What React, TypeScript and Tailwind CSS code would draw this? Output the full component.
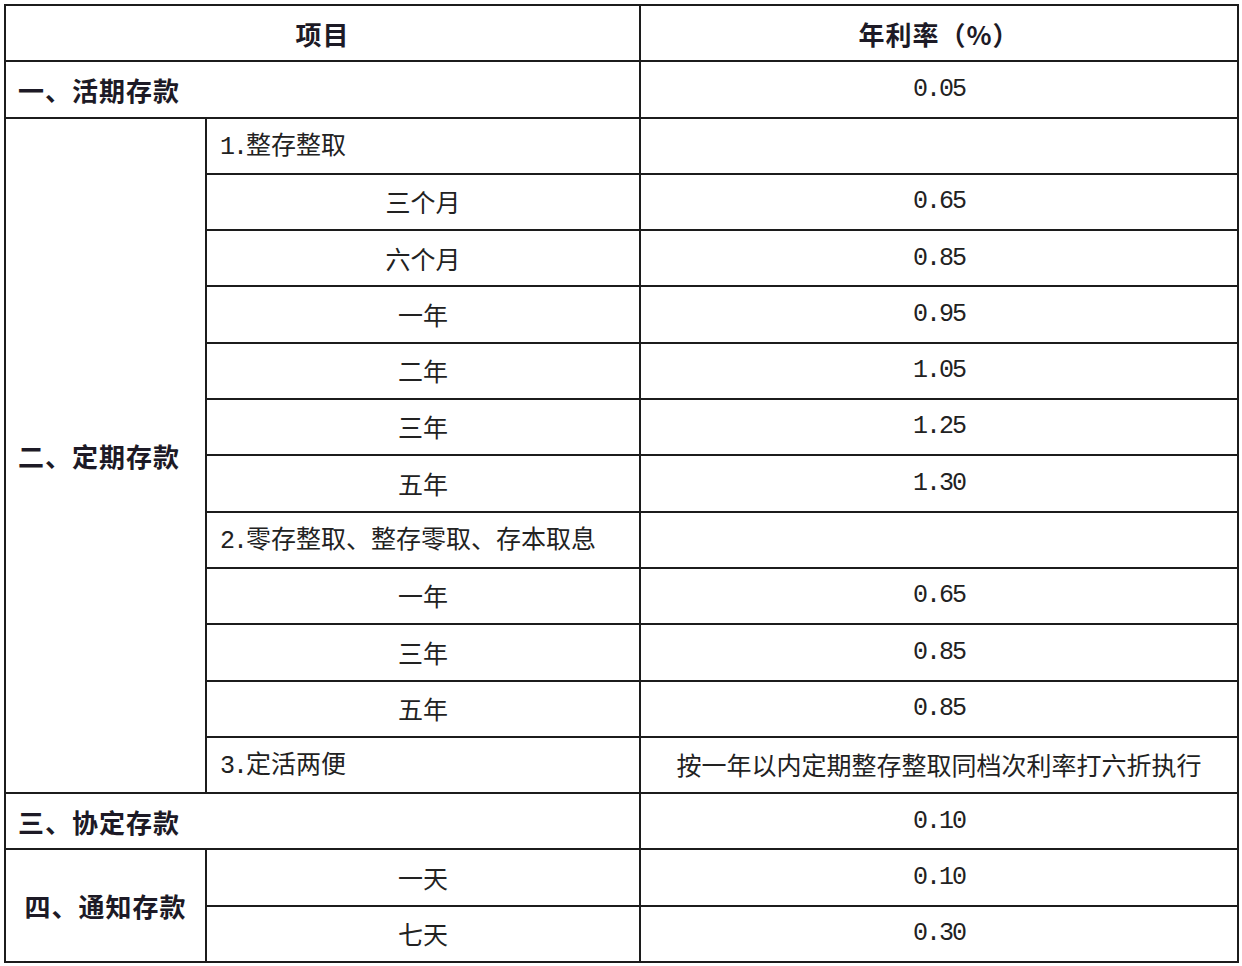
import React from 'react';

type Row = { label: string; rate: string; kind: 'sub' | 'group' };

const fixedRows: Row[] = [
  { label: '1.整存整取', rate: '', kind: 'group' },
  { label: '三个月', rate: '0.65', kind: 'sub' },
  { label: '六个月', rate: '0.85', kind: 'sub' },
  { label: '一年', rate: '0.95', kind: 'sub' },
  { label: '二年', rate: '1.05', kind: 'sub' },
  { label: '三年', rate: '1.25', kind: 'sub' },
  { label: '五年', rate: '1.30', kind: 'sub' },
  { label: '2.零存整取、整存零取、存本取息', rate: '', kind: 'group' },
  { label: '一年', rate: '0.65', kind: 'sub' },
  { label: '三年', rate: '0.85', kind: 'sub' },
  { label: '五年', rate: '0.85', kind: 'sub' },
  { label: '3.定活两便', rate: '按一年以内定期整存整取同档次利率打六折执行', kind: 'group' },
];

const cell = 'border-2 border-[#1c1c1c] align-middle';
const bold = "font-bold text-[26px] tracking-[1px] text-[#1d1a26] font-['Noto_Sans_CJK_SC',sans-serif]";
const plain = "text-[25px] text-[#222] font-['Noto_Sans_CJK_SC',sans-serif]";
const num = "font-['Liberation_Mono','Noto_Sans_CJK_SC',monospace] text-[25px] tracking-[-2px] text-[#222]";

const Rate = ({ value }: { value: string }) => {
  if (!value) return null;
  // digits look like a monospace print face, sentences stay CJK
  if (/^[0-9.]+$/.test(value)) return <span className={num}>{value}</span>;
  return <span className={plain}>{value}</span>;
};

const Label = ({ text }: { text: string }) => {
  const m = text.match(/^(\d\.)(.*)$/);
  if (!m) return <span className={plain}>{text}</span>;
  return (
    <span className={plain}>
      <span className={num}>{m[1]}</span>
      {m[2]}
    </span>
  );
};

export default function App() {
  return (
    <div className="min-h-screen bg-white pl-[4px] pt-[4px]">
      <table className="w-[1233px] table-fixed border-collapse border-2 border-[#1c1c1c]">
        <colgroup>
          <col className="w-[201px]" />
          <col className="w-[434px]" />
          <col className="w-[598px]" />
        </colgroup>
        <tbody>
          <tr className="h-[56.3px]">
            <td colSpan={2} className={`${cell} text-center ${bold}`}>项目</td>
            <td className={`${cell} text-center ${bold}`}>年利率（%）</td>
          </tr>
          <tr className="h-[56.3px]">
            <td colSpan={2} className={`${cell} pl-[12px] ${bold}`}>一、活期存款</td>
            <td className={`${cell} text-center`}><Rate value="0.05" /></td>
          </tr>
          {fixedRows.map((r, i) => (
            <tr key={i} className="h-[56.3px]">
              {i === 0 && (
                <td rowSpan={fixedRows.length} className={`${cell} pl-[12px] ${bold}`}>
                  二、定期存款
                </td>
              )}
              <td className={`${cell} ${r.kind === 'group' ? 'pl-[13px] text-left' : 'text-center'}`}>
                <Label text={r.label} />
              </td>
              <td className={`${cell} text-center`}><Rate value={r.rate} /></td>
            </tr>
          ))}
          <tr className="h-[56.3px]">
            <td colSpan={2} className={`${cell} pl-[12px] ${bold}`}>三、协定存款</td>
            <td className={`${cell} text-center`}><Rate value="0.10" /></td>
          </tr>
          <tr className="h-[56.3px]">
            <td rowSpan={2} className={`${cell} text-center ${bold}`}>四、通知存款</td>
            <td className={`${cell} text-center`}><Label text="一天" /></td>
            <td className={`${cell} text-center`}><Rate value="0.10" /></td>
          </tr>
          <tr className="h-[56.3px]">
            <td className={`${cell} text-center`}><Label text="七天" /></td>
            <td className={`${cell} text-center`}><Rate value="0.30" /></td>
          </tr>
        </tbody>
      </table>
    </div>
  );
}
